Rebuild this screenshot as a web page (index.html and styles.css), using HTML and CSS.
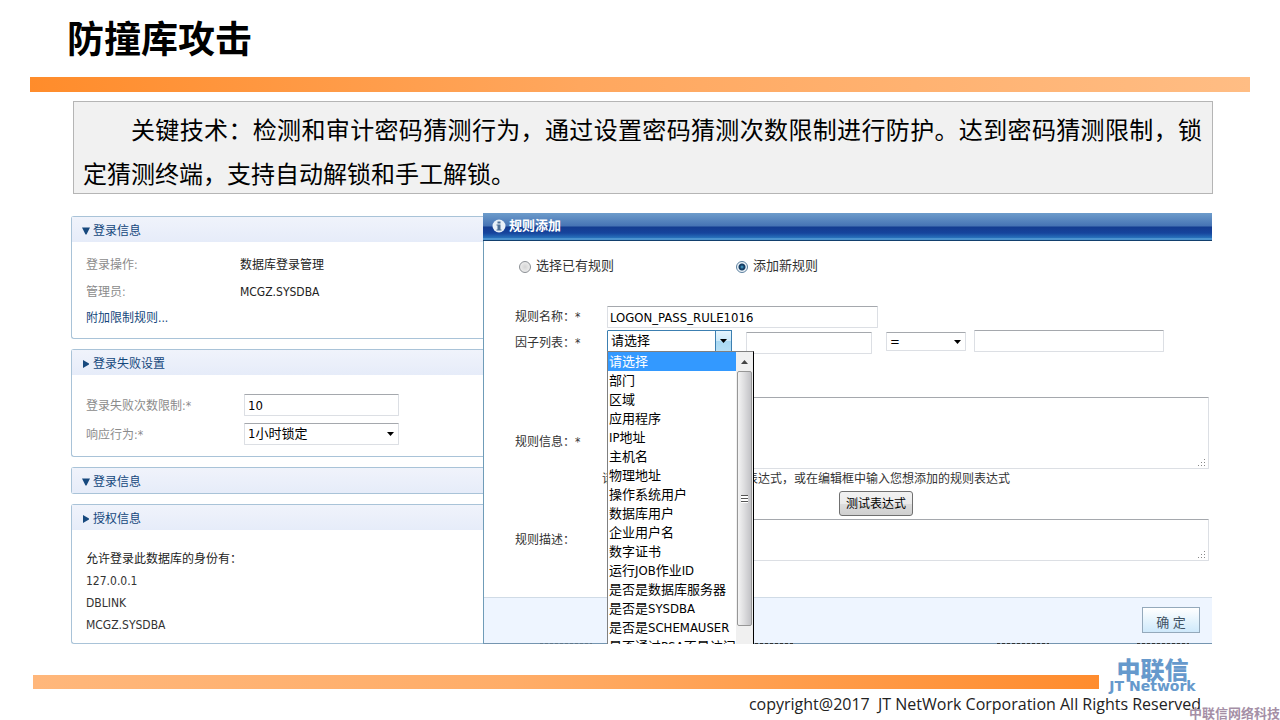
FILE: index.html
```html
<!DOCTYPE html>
<html lang="zh-CN">
<head>
<meta charset="utf-8">
<meta name="viewport" content="width=device-width, initial-scale=1">
<title>防撞库攻击</title>
<link rel="stylesheet" href="styles.css">
</head>
<body>
<div class="slide">
  <header class="slide-header">
    <h1 class="slide-title">防撞库攻击</h1>
    <div class="top-bar"></div>
  </header>

  <p class="summary">关键技术：检测和审计密码猜测行为，通过设置密码猜测次数限制进行防护。达到密码猜测限制，锁定猜测终端，支持自动解锁和手工解锁。</p>

  <main class="workspace">
    <div class="panels">
      <section class="panel">
        <h2 class="panel-head"><svg class="tri" viewBox="0 0 8 8"><path d="M0 0.500h8L4.500 7.500h-1z"/></svg>登录信息</h2>
        <div class="panel-body info">
          <dl class="info-list">
            <dt>登录操作:</dt><dd>数据库登录管理</dd>
            <dt>管理员:</dt><dd>MCGZ.SYSDBA</dd>
          </dl>
          <a class="rule-link" href="#rules">附加限制规则...</a>
        </div>
      </section>

      <section class="panel">
        <h2 class="panel-head"><svg class="tri" viewBox="0 0 8 8"><path d="M1 0l6 3.500v1L1 8z"/></svg>登录失败设置</h2>
        <div class="panel-body limits">
          <label for="fail-limit">登录失败次数限制:*</label>
          <input class="field" id="fail-limit" type="text" value="10">
          <label for="response">响应行为:*</label>
          <div class="select-wrap">
            <select class="field" id="response"><option>1小时锁定</option></select>
            <svg class="caret" viewBox="0 0 7 4"><path d="M0 0h7L3.500 4z"/></svg>
          </div>
        </div>
      </section>

      <section class="panel">
        <h2 class="panel-head"><svg class="tri" viewBox="0 0 8 8"><path d="M0 0.500h8L4.500 7.500h-1z"/></svg>登录信息</h2>
      </section>

      <section class="panel">
        <h2 class="panel-head"><svg class="tri" viewBox="0 0 8 8"><path d="M1 0l6 3.500v1L1 8z"/></svg>授权信息</h2>
        <div class="panel-body grants">
          <p>允许登录此数据库的身份有：</p>
          <ul>
            <li>127.0.0.1</li>
            <li>DBLINK</li>
            <li>MCGZ.SYSDBA</li>
          </ul>
        </div>
      </section>
    </div>

    <form class="dialog">
      <h2 class="dialog-head">
        <svg class="info-icon" viewBox="0 0 14 14"><circle cx="7" cy="7" r="6.500" fill="#e9f1f8"/><path d="M5.500 2.500h3v2h-3zM4.500 5.500h4v5h1v1h-5v-1h1v-4h-1z" fill="#4d6f95"/></svg>
        规则添加
      </h2>
      <div class="dialog-body">
        <div class="modes">
          <label><input class="radio" type="radio" name="mode">选择已有规则</label>
          <label><input class="radio" type="radio" name="mode" checked>添加新规则</label>
        </div>

        <div class="form-grid">
          <label class="name" for="rule-name">规则名称：*</label>
          <div><input class="field rule-name" id="rule-name" type="text" value="LOGON_PASS_RULE1016"></div>

          <label class="name factor-label" for="factor">因子列表：*</label>
          <div class="factor-row">
            <div class="select-wrap factor">
              <select class="field" id="factor"><option>请选择</option></select>
              <span class="drop-cap"><svg viewBox="0 0 7 4"><path d="M0 0h7L3.500 4z"/></svg></span>
              <div class="drop-list">
                <ul role="listbox" aria-label="因子列表">
                  <li class="active" role="option" aria-selected="true">请选择</li>
                  <li role="option">部门</li>
                  <li role="option">区域</li>
                  <li role="option">应用程序</li>
                  <li role="option">IP地址</li>
                  <li role="option">主机名</li>
                  <li role="option">物理地址</li>
                  <li role="option">操作系统用户</li>
                  <li role="option">数据库用户</li>
                  <li role="option">企业用户名</li>
                  <li role="option">数字证书</li>
                  <li role="option">运行JOB作业ID</li>
                  <li role="option">是否是数据库服务器</li>
                  <li role="option">是否是SYSDBA</li>
                  <li role="option">是否是SCHEMAUSER</li>
                  <li role="option">是否通过PSA不是访问</li>
                </ul>
                <div class="scroll">
                  <svg class="scroll-up" viewBox="0 0 7 4"><path d="M0 4h7L3.500 0z"/></svg>
                  <div class="thumb"><span class="grip"></span></div>
                </div>
              </div>
            </div>
            <input class="field part" type="text" aria-label="因子参数">
            <div class="select-wrap op">
              <select class="field" aria-label="运算符"><option>=</option></select>
              <svg class="caret" viewBox="0 0 7 4"><path d="M0 0h7L3.500 4z"/></svg>
            </div>
            <input class="field value" type="text" aria-label="因子值">
          </div>

          <label class="name info-label" for="rule-info">规则信息：*</label>
          <div class="area info-area">
            <textarea class="field" id="rule-info"></textarea>
            <svg class="resizer" viewBox="0 0 8 8"><path d="M6 0h1v1H6zM3 3h1v1H3zM6 3h1v1H6zM0 6h1v1H0zM3 6h1v1H3zM6 6h1v1H6z"/></svg>
          </div>

          <div class="tools">
            <p class="hint">请选择上面的因子列表生成表达式，或在编辑框中输入您想添加的规则表达式</p>
            <button class="test-btn" type="button">测试表达式</button>
          </div>

          <label class="name" for="rule-desc">规则描述：</label>
          <div class="area desc-area">
            <textarea class="field" id="rule-desc"></textarea>
            <svg class="resizer" viewBox="0 0 8 8"><path d="M6 0h1v1H6zM3 3h1v1H3zM6 3h1v1H6zM0 6h1v1H0zM3 6h1v1H3zM6 6h1v1H6z"/></svg>
          </div>
        </div>
      </div>
      <div class="dialog-foot"><button class="ok-btn" type="submit">确 定</button></div>
      <div class="scraps"><i></i><i></i><i></i><i></i></div>
    </form>
  </main>

  <footer class="slide-footer">
    <div class="footer-row">
      <div class="bottom-bar"></div>
      <div class="logo"><span class="logo-cn">中联信</span><span class="logo-en">JT Network</span></div>
    </div>
    <p class="copyright">copyright@2017&nbsp; JT NetWork Corporation All Rights Reserved</p>
    <span class="watermark">中联信网络科技</span>
  </footer>
</div>
</body>
</html>
```
FILE: styles.css
```css
* { box-sizing: border-box; }

body {
  margin: 0;
  background: #fff;
  color: #222;
  font: 12px/20px "DejaVu Sans Condensed", "Noto Sans CJK SC", sans-serif;
}

h1, h2, p, ul, dl, dd { margin: 0; padding: 0; }
ul { list-style: none; }

.slide {
  display: flex;
  flex-direction: column;
  min-height: 100vh;
  overflow: hidden;
}

.slide-title {
  padding: 9px 67px 12px;
  color: #000;
  font: bold 37px/56px "Noto Sans CJK SC", sans-serif;
}
.top-bar {
  height: 15px;
  margin: 0 30px;
  background: linear-gradient(90deg, #ff8c2b, #ffa75e 45%, #ffbd84);
}

.summary {
  margin: 9px 67px 0 73px;
  padding: 5px 10px 0 9px;
  height: 93px;
  border: 1px solid #b5b5b5;
  background: #f1f1f1;
  color: #000;
  font: 24px/44px "Noto Sans CJK SC", sans-serif;
  text-align: justify;
  text-indent: 48px;
}

.workspace {
  display: grid;
  grid-template-columns: 412fr 729fr;
  margin: 19px 68px 0 71px;
}

/* Left column */
.panels {
  display: flex;
  flex-direction: column;
  gap: 10px;
  padding-top: 3px;
}
.panel {
  border: 1px solid #a9c3d8;
  border-right: 0;
  border-radius: 3px 0 0 3px;
}
.panel-head {
  display: flex;
  align-items: center;
  gap: 3px;
  height: 25px;
  padding: 2px 10px 0;
  background: linear-gradient(#f0f3fb, #e6ecf9);
  color: #14477c;
  font-size: 12px;
  font-weight: normal;
}
.tri { width: 8px; height: 8px; fill: #17497e; }

.panel-body { padding: 0 14px; }
.info { height: 96px; padding-top: 9px; }
.info-list {
  display: grid;
  grid-template-columns: 154px 1fr;
  grid-auto-rows: 27px;
  align-items: center;
}
.info-list dt, .limits label { color: #8b8b8b; }
.info-list dd { color: #222; }
.rule-link { display: block; padding-top: 3px; color: #14477c; text-decoration: none; }

.limits {
  display: grid;
  grid-template-columns: 158px 155px;
  grid-auto-rows: 22px;
  gap: 7px 0;
  align-items: center;
  height: 81px;
  padding-top: 19px;
}
.limits label { padding-top: 2px; }

.grants { height: 113px; padding-top: 18px; line-height: 22px; color: #333; }
.grants p { color: #222; }

/* Controls */
.field {
  display: block;
  width: 100%;
  height: 22px;
  margin: 0;
  padding: 0 3px;
  border: 1px solid #dcdfe4;
  border-top-color: #a5a8ad;
  border-radius: 1px;
  outline: 0;
  background: #fff;
  color: #000;
  font: 13px/20px "DejaVu Sans Condensed", "Noto Sans CJK SC", sans-serif;
  appearance: none;
}
.rule-name { padding: 0 2px; }
.select-wrap { position: relative; }
.caret {
  position: absolute;
  top: 9px;
  right: 5px;
  width: 7px;
  height: 4px;
  pointer-events: none;
}

/* Dialog */
.dialog {
  position: relative;
  display: flex;
  flex-direction: column;
  border-left: 1px solid #6f9cb8;
  border-bottom: 1px solid #7595b0;
  background: #fff;
  color: #333;
}
.dialog-head {
  display: flex;
  align-items: center;
  gap: 3px;
  height: 28px;
  margin-left: -1px;
  padding: 0 9px 2px;
  border-bottom: 1px solid #123f6d;
  background: linear-gradient(#6d9ccb, #4673b4 13px, #143c90 14px, #16449d 20px, #2974bd 25px, #6fb2e2 26px, #2974bd);
  color: #fff;
  font-size: 13px;
  font-weight: bold;
}
.info-icon { width: 14px; height: 14px; }

.dialog-body { flex: 1; padding: 15px 3px 0 31px; }
.modes {
  display: grid;
  grid-template-columns: 217px 1fr;
  font-size: 13px;
}
.modes label { display: flex; align-items: center; gap: 5px; padding-left: 4px; }
.radio {
  width: 12px;
  height: 12px;
  margin: 2px 0 0;
  border: 1px solid #8b8f94;
  border-radius: 50%;
  background: radial-gradient(#d5d5d5, #f5f5f5);
  appearance: none;
}
.radio:checked {
  border-color: #5b7f9e;
  background: radial-gradient(circle, #4fb4de 0, #173f66 2px, #173f66 3px, #eef5fa 4px);
}

.form-grid {
  display: grid;
  grid-template-columns: 92px 1fr;
  align-items: center;
  margin-top: 30px;
}
.factor-label { padding-top: 3px; }
.rule-name { width: 271px; }
.factor-row {
  display: flex;
  align-items: center;
  height: 26px;
}
.factor { width: 125px; margin-right: 14px; }
.factor .field { border-color: #3c7fb1; }
.drop-cap {
  position: absolute;
  top: 0;
  right: 0;
  display: grid;
  place-items: center;
  width: 17px;
  height: 22px;
  border: 1px solid #3c7fb1;
  background: linear-gradient(#e6f5fd, #cdeafa 50%, #a9d9f3 51%, #b5dff6);
  pointer-events: none;
}
.drop-cap svg { width: 7px; height: 4px; }
.part { width: 126px; margin-right: 14px; align-self: flex-end; }
.op { width: 80px; margin-right: 8px; }
.op .field { height: 19px; line-height: 17px; }
.op .caret { top: 8px; }
.value { width: 190px; }

.drop-list {
  position: absolute;
  z-index: 2;
  top: 21px;
  left: 0;
  display: flex;
  width: 147px;
  height: 293px;
  overflow: hidden;
  border: 1px solid #808080;
  border-right-color: #000;
  border-bottom: 0;
  background: #fff;
  color: #000;
  font-size: 13px;
  line-height: 19px;
}
.drop-list ul { flex: 1; min-width: 0; white-space: nowrap; overflow: hidden; }
.drop-list li { height: 19px; padding-left: 1px; }
.drop-list .active { background: #3399ff; color: #fff; }
.scroll {
  display: flex;
  flex-direction: column;
  align-items: center;
  width: 17px;
  background: #f0f0f0;
}
.scroll-up { width: 7px; height: 4px; margin: 8px 0 7px; fill: #444; }
.thumb {
  display: grid;
  place-items: center;
  width: 15px;
  height: 255px;
  border: 1px solid #979797;
  border-radius: 2px;
  background: linear-gradient(90deg, #f4f4f4, #dcdcde 50%, #c2c2c6);
}
.grip {
  width: 7px;
  height: 8px;
  background: repeating-linear-gradient(#555 0, #555 1px, #fff 1px, #fff 3px);
}

.area { position: relative; }
.area .field { height: 100%; resize: none; }
.resizer {
  position: absolute;
  right: 3px;
  bottom: 2px;
  width: 8px;
  height: 8px;
  fill: #888;
}
.info-area { height: 72px; margin-top: 43px; }
.info-label { padding-top: 61px; }
.tools { grid-column: 1 / -1; height: 50px; padding-left: 87px; }
.hint { line-height: 20px; white-space: nowrap; }
.test-btn {
  display: block;
  width: 74px;
  height: 25px;
  margin: 2px 0 0 237px;
  padding: 0;
  border: 1px solid #707070;
  border-radius: 3px;
  background: linear-gradient(#f2f2f2, #ebebeb 50%, #dddddd 51%, #cfcfcf);
  color: #000;
  font: 12px/20px "DejaVu Sans Condensed", "Noto Sans CJK SC", sans-serif;
}
.desc-area { height: 42px; }

.dialog-foot {
  display: flex;
  justify-content: flex-end;
  height: 46px;
  padding: 9px 12px 0;
  border-top: 1px solid #d0dbe6;
  background: #eef5ff;
}
.ok-btn {
  width: 58px;
  height: 26px;
  padding: 3px 0 0;
  border: 1px solid #94a9bb;
  background: linear-gradient(#fff, #e6f4fd 50%, #cfe9fb);
  color: #3f5263;
  font: 13px/20px "Noto Sans", "Noto Sans CJK SC", sans-serif;
}

/* Tops of the page text that shows below the dialog edge */
.scraps {
  position: absolute;
  left: 56px;
  right: 22px;
  bottom: -1px;
  display: grid;
  grid-template-columns: 215fr 242fr 140fr 53fr;
  height: 1px;
}
.scraps i { width: 52px; background: repeating-linear-gradient(90deg, #333 0, #333 3px, transparent 3px, transparent 5px); }
.scraps i:first-child { opacity: 0.3; }
.scraps i:nth-child(2) { width: 40px; }

/* Footer */
.slide-footer { position: relative; flex: 1; padding-top: 15px; }
.footer-row { display: flex; align-items: flex-end; gap: 5px; margin: 0 79px 0 33px; }
.bottom-bar {
  flex: 1;
  height: 14px;
  margin-bottom: 4px;
  background: linear-gradient(90deg, #ffb77b, #ffad68 45%, #ff8c2e);
}
.logo {
  display: flex;
  flex-direction: column;
  align-items: center;
  width: 97px;
  color: #6699cc;
}
.logo-cn { font: 900 24px/20px "Noto Sans CJK SC", sans-serif; }
.logo-en { font: bold 14px/14px "DejaVu Sans", sans-serif; white-space: nowrap; }
.copyright {
  padding-right: 79px;
  color: #222;
  font: 16px/22px "Open Sans", sans-serif;
  text-align: right;
}
.watermark {
  position: absolute;
  right: 0;
  bottom: 0;
  color: #a58fa6;
  font: bold 13px/14px "Noto Sans CJK SC", sans-serif;
  text-shadow: 0 0 1px #fff;
}
```
